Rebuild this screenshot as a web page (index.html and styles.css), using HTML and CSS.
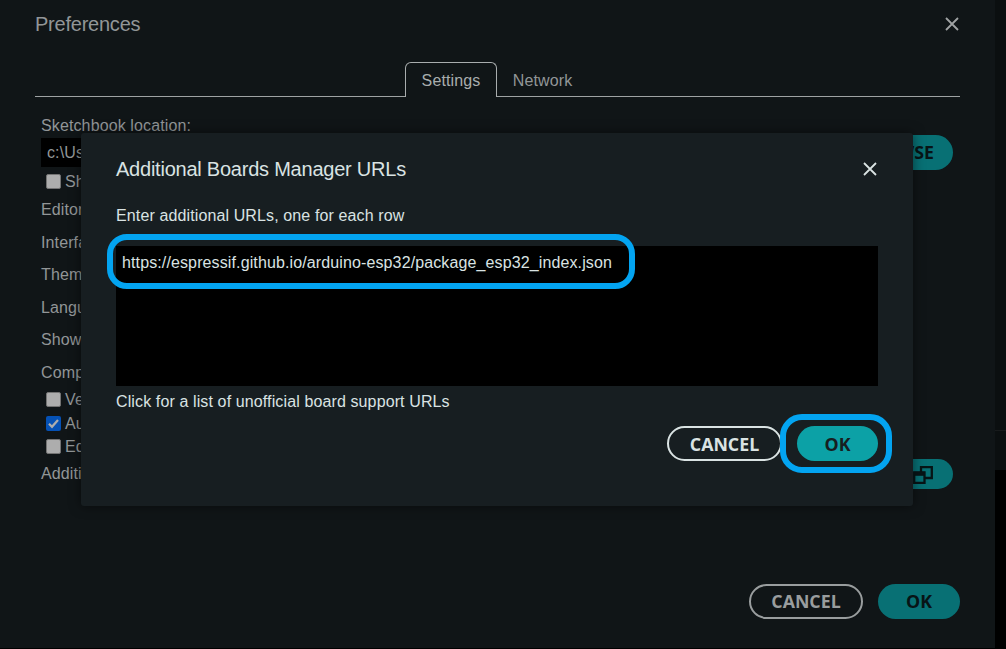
FILE: index.html
```html
<!DOCTYPE html>
<html lang="en">
<head>
<meta charset="utf-8">
<title>Preferences</title>
<link rel="stylesheet" href="styles.css">
</head>
<body>
<div class="screen">
  <main class="prefs">
    <header class="prefs-head">
      <h1 class="title">Preferences</h1>
      <svg class="close" viewBox="0 0 14 14"><path d="M1 1L13 13M13 1L1 13"/></svg>
    </header>
    <nav class="tabs">
      <span class="tab-line"></span>
      <span class="tab active">Settings</span>
      <span class="tab">Network</span>
    </nav>
    <section class="form">
      <div class="label first">Sketchbook location:</div>
      <div class="path-row">
        <div class="path">c:\Us</div>
        <div class="button fill browse">BROWSE</div>
      </div>
      <div class="check sketch"><i class="box"></i><span>Sh</span></div>
      <div class="label editor">Editor</div>
      <div class="label row">Interfa</div>
      <div class="label row">Them</div>
      <div class="label row">Langu</div>
      <div class="label row">Show</div>
      <div class="label row">Comp</div>
      <div class="check"><i class="box"></i><span>Ve</span></div>
      <div class="check"><i class="box on"><svg viewBox="0 0 15 15"><path d="M3 7.8L6 10.8L12 4"/></svg></i><span>Au</span></div>
      <div class="check"><i class="box"></i><span>Ed</span></div>
      <div class="urls-row">
        <div class="label">Additi</div>
        <div class="button fill expand">
          <svg viewBox="0 0 20 18"><path d="M8 6V1.2H18.8V12H12"/><path d="M1.2 6.5H11.5V16.8H1.2Z"/><path class="bar" d="M1 7.8H12"/></svg>
        </div>
      </div>
    </section>
    <footer class="actions">
      <div class="button outline">CANCEL</div>
      <div class="button fill ok">OK</div>
    </footer>
  </main>
  <aside class="backdrop"></aside>
</div>
<div class="modal">
  <header class="modal-head">
    <h2 class="title">Additional Boards Manager URLs</h2>
    <svg class="close" viewBox="0 0 14 14"><path d="M1 1L13 13M13 1L1 13"/></svg>
  </header>
  <p class="hint">Enter additional URLs, one for each row</p>
  <div class="textarea"><span class="url">https://espressif.github.io/arduino-esp32/package_esp32_index.json</span></div>
  <p class="link">Click for a list of unofficial board support URLs</p>
  <footer class="modal-actions">
    <div class="button outline">CANCEL</div>
    <div class="button fill ok">OK</div>
  </footer>
</div>
<div class="ring ring-url"></div>
<div class="ring ring-ok"></div>
</body>
</html>
```
FILE: styles.css
```css
* { box-sizing: border-box; }
body {
  margin: 0;
  width: 1006px;
  height: 649px;
  overflow: hidden;
  position: relative;
  background: #000;
  font: 16px/20px "Liberation Sans", Arial, sans-serif;
  letter-spacing: 0.12px;
  color: #929697;
}
.screen { display: flex; height: 649px; }
.prefs {
  width: 995px;
  height: 648px;
  padding: 12px 35px 0;
  background: #101517;
}
.backdrop {
  width: 11px;
  height: 470px;
  background: linear-gradient(#0b0f10 0 430px, #181b1c 430px 431px, #0b0f10 431px);
}
.prefs-head { display: flex; justify-content: space-between; height: 50px; }
.title { margin: 0; font-size: 20px; line-height: 24px; font-weight: 400; white-space: nowrap; letter-spacing: -0.23px; }
.close { width: 14px; height: 14px; margin: 5px 1px 0 0; fill: none; stroke: #a0a3a4; stroke-width: 1.8; }
.tabs { display: flex; height: 35px; }
.tabs::after { content: ""; flex: 1; border-bottom: 1px solid #9ea2a3; }
.tab-line { width: 370px; border-bottom: 1px solid #9ea2a3; }
.tab {
  width: 91px;
  padding: 8px 0 0;
  line-height: 22px;
  text-align: center;
  border-bottom: 1px solid #9ea2a3;
}
.tab.active {
  width: 92px;
  padding-top: 7px;
  border: 1px solid #a9adae;
  border-bottom: 0;
  border-radius: 6px 6px 0 0;
  color: #a9adae;
}
.form { padding: 19px 7px 0 6px; height: 487px; }
.label { height: 20px; white-space: nowrap; }
.path-row { display: flex; justify-content: space-between; height: 34px; }
.path {
  width: 780px;
  height: 29px;
  margin-top: 2px;
  padding: 5px 6px;
  background: #000;
}
.check { display: flex; align-items: center; gap: 4px; height: 23.5px; padding-left: 5px; }
.check.sketch { height: 22px; }
.check span { padding-top: 1px; }
.box { width: 15px; height: 15px; border: 1px solid #737373; border-radius: 2px; background: #adadad; display: block; }
.box.on { border: 0; background: #0551b5; }
.box svg { display: block; width: 15px; height: 15px; fill: none; stroke: #adadad; stroke-width: 2.2; }
.editor { margin-top: 8px; }
.row { margin-top: 12.6px; }
.row + .check { margin-top: 5px; }
.urls-row { display: flex; justify-content: space-between; align-items: center; height: 30px; margin-top: 1px; }
.button {
  display: flex;
  align-items: center;
  justify-content: center;
  height: 35px;
  border-radius: 18px;
  font: 700 17.8px/35px "Open Sans", sans-serif;
  letter-spacing: 0;
}
.fill { background: #087074; color: #071416; }
.browse { width: 112px; margin-top: -1px; padding-right: 1px; }
.expand { width: 60px; height: 30px; border-radius: 15px; }
.expand svg { width: 20px; height: 18px; margin-top: 2px; fill: none; stroke: #071416; stroke-width: 2.3; }
.expand .bar { stroke-width: 4; }
.outline { width: 114px; border: 2px solid #999d9e; color: #999d9e; }
.ok { width: 82px; }
.actions { display: flex; justify-content: flex-end; gap: 15px; }

.modal {
  position: absolute;
  left: 81px;
  top: 133px;
  width: 832px;
  height: 373px;
  padding: 24px 35px 0;
  border-radius: 3px;
  background: #171e21;
  color: #dae3e3;
  box-shadow: 0 0 12px rgba(0, 0, 0, .5);
}
.modal-head { display: flex; justify-content: space-between; height: 49px; }
.modal .close { stroke: #dae3e3; }
.hint { margin: 0 0 20px; white-space: nowrap; }
.textarea { height: 140px; padding: 7px 6px; background: #000; }
.link { margin: 6px 0 14px; white-space: nowrap; }
.modal-actions { display: flex; justify-content: flex-end; gap: 15px; }
.modal .button { padding-top: 2px; }
.modal .outline { width: 115px; border-color: #dae3e3; color: #dae3e3; }
.modal .ok { width: 81px; }
.modal .fill { background: #0ca1a6; color: #171e21; }
.ring { position: absolute; border: 6px solid #03a4f1; }
.ring-url { left: 107px; top: 234px; width: 528px; height: 55px; border-radius: 20px; }
.ring-ok { left: 780px; top: 414px; width: 112px; height: 59px; border-radius: 22px; }
```
